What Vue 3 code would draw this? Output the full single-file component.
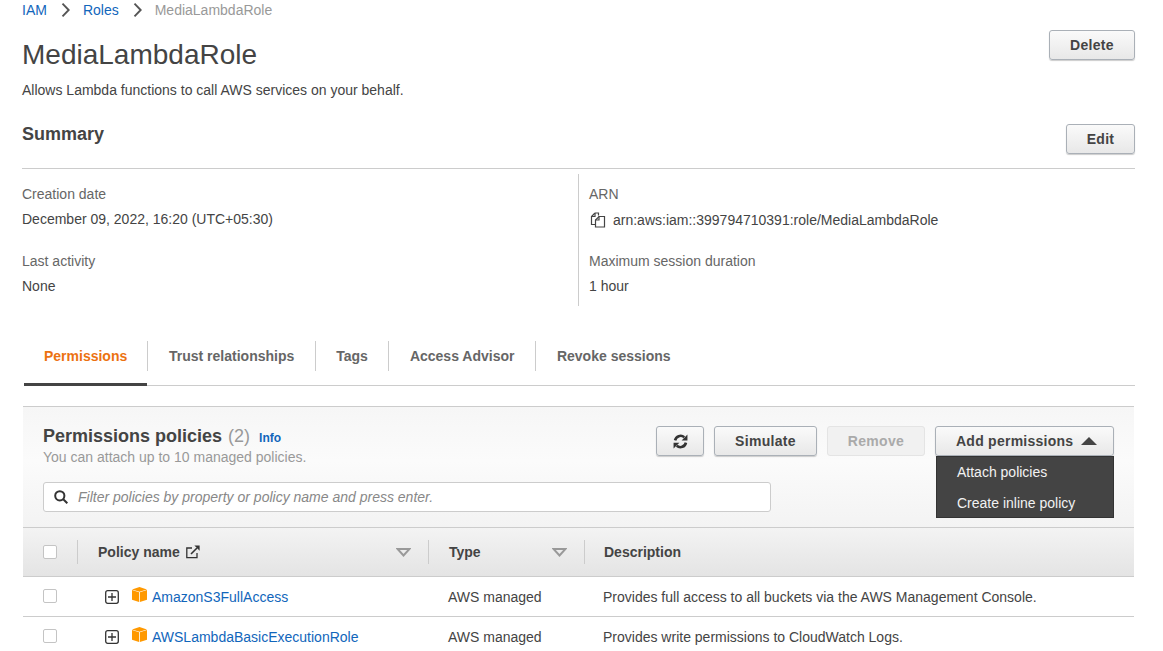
<script setup>
const tabs = ['Permissions', 'Trust relationships', 'Tags', 'Access Advisor', 'Revoke sessions']
const rows = [
  { name: 'AmazonS3FullAccess', type: 'AWS managed', desc: 'Provides full access to all buckets via the AWS Management Console.' },
  { name: 'AWSLambdaBasicExecutionRole', type: 'AWS managed', desc: 'Provides write permissions to CloudWatch Logs.' }
]
</script>

<template>
  <div class="page">
    <nav class="crumbs">
      <a class="link">IAM</a>
      <svg class="chev" width="9" height="14" viewBox="0 0 9 14"><path d="M1.5 .7 L7.7 7 L1.5 13.3" /></svg>
      <a class="link">Roles</a>
      <svg class="chev" width="9" height="14" viewBox="0 0 9 14"><path d="M1.5 .7 L7.7 7 L1.5 13.3" /></svg>
      <span class="crumb-current">MediaLambdaRole</span>
    </nav>

    <header class="head">
      <div>
        <h1>MediaLambdaRole</h1>
        <p class="lead">Allows Lambda functions to call AWS services on your behalf.</p>
      </div>
      <button class="btn delete">Delete</button>
    </header>

    <section class="summary-head">
      <h2>Summary</h2>
      <button class="btn edit">Edit</button>
    </section>

    <section class="details">
      <div class="col">
        <div class="field">
          <div class="label">Creation date</div>
          <div class="value">December 09, 2022, 16:20 (UTC+05:30)</div>
        </div>
        <div class="field">
          <div class="label">Last activity</div>
          <div class="value">None</div>
        </div>
      </div>
      <div class="col right">
        <div class="field">
          <div class="label">ARN</div>
          <div class="value arn">
            <svg width="16" height="16" viewBox="0 0 16 16" fill="none" stroke="#444" stroke-width="1.2">
              <path d="M5 1h3.5v2.5M5 1 1.5 4.5v8h4" />
              <path d="M5 1v3.5H1.5" />
              <path d="M9 4.5h5.5v10.5h-9V8z" />
              <path d="M9 4.5V8H5.5" />
            </svg>
            <span>arn:aws:iam::399794710391:role/MediaLambdaRole</span>
          </div>
        </div>
        <div class="field">
          <div class="label">Maximum session duration</div>
          <div class="value">1 hour</div>
        </div>
      </div>
    </section>

    <div class="tabs">
      <div v-for="(t, i) in tabs" :key="t" class="tab" :class="{ active: i === 0 }">{{ t }}</div>
    </div>

    <section class="panel">
      <div class="panel-top">
        <div class="panel-row">
          <div>
            <div class="panel-title">
              <span class="pt-main">Permissions policies</span>
              <span class="pt-count">(2)</span>
              <a class="info">Info</a>
            </div>
            <div class="panel-sub">You can attach up to 10 managed policies.</div>
          </div>
          <div class="actions">
            <button class="btn refresh">
              <svg width="15" height="15" viewBox="0 0 16 16" fill="none" stroke="#333" stroke-width="2.8">
                <path d="M2.2 6.8A6 6 0 0 1 12 3.4" />
                <path d="M13.8 9.2A6 6 0 0 1 4 12.6" />
                <path d="M15.4 .6v6.2H9.2z" fill="#333" stroke="none" />
                <path d="M.6 15.4V9.2h6.2z" fill="#333" stroke="none" />
              </svg>
            </button>
            <button class="btn simulate">Simulate</button>
            <button class="btn remove" disabled>Remove</button>
            <div class="add-wrap">
              <button class="btn add">
                Add permissions
                <svg width="16" height="8" viewBox="0 0 16 8"><path d="M8 0 L16 8 H0z" fill="#444" /></svg>
              </button>
              <ul class="menu">
                <li>Attach policies</li>
                <li>Create inline policy</li>
              </ul>
            </div>
          </div>
        </div>
        <div class="search">
          <svg width="14" height="14" viewBox="0 0 14 14" fill="none" stroke="#333" stroke-width="2">
            <circle cx="5.8" cy="5.8" r="4.6" />
            <path d="M9 9 L13.3 13.3" />
          </svg>
          <span>Filter policies by property or policy name and press enter.</span>
        </div>
      </div>

      <div class="thead">
        <div class="c-check"><span class="box"></span></div>
        <div class="th c-name">
          <span class="th-label">Policy name
            <svg width="14" height="14" viewBox="0 0 14 14" fill="none" stroke="#333" stroke-width="1.3">
              <path d="M11 8v4.6H.8V3H6" />
              <path d="M5 9 11 3" stroke-width="1.6" />
              <path d="M8.4 .6H13.6V5.8z" fill="#333" stroke="none" />
            </svg>
          </span>
          <svg class="sort" width="15" height="9" viewBox="0 0 15 9"><path d="M1.5 1h12L7.5 7.5z" fill="none" stroke="#999" stroke-width="2" /></svg>
        </div>
        <div class="th c-type">
          <span class="th-label">Type</span>
          <svg class="sort" width="15" height="9" viewBox="0 0 15 9"><path d="M1.5 1h12L7.5 7.5z" fill="none" stroke="#999" stroke-width="2" /></svg>
        </div>
        <div class="th c-desc"><span class="th-label">Description</span></div>
      </div>

      <div v-for="r in rows" :key="r.name" class="row">
        <div class="c-check"><span class="box"></span></div>
        <div class="td c-name">
          <svg class="plus" width="14" height="14" viewBox="0 0 14 14" fill="none" stroke="#333" stroke-width="1.3">
            <rect x=".7" y=".7" width="12.6" height="12.6" rx="2" />
            <path d="M7 3v8M3 7h8" />
          </svg>
          <svg class="cube" width="15" height="15" viewBox="0 0 15 15">
            <path d="M7.5 0 L15 2.4 L7.5 4.8 L0 2.4z" fill="#f90" />
            <path d="M0 3 L7.1 5.3 V15 L0 12.8z" fill="#f90" />
            <path d="M15 3 L7.9 5.3 V15 L15 12.8z" fill="#f90" />
          </svg>
          <a class="link">{{ r.name }}</a>
        </div>
        <div class="td c-type">{{ r.type }}</div>
        <div class="td c-desc">{{ r.desc }}</div>
      </div>
    </section>
  </div>
</template>

<style>
html, body { margin: 0; background: #fff; overflow: hidden; }
</style>

<style scoped>
.page {
  box-sizing: border-box;
  width: 1163px;
  height: 651px;
  overflow: hidden;
  padding: 0 28px 0 22px;
  font-family: "Liberation Sans", Arial, sans-serif;
  font-size: 14px;
  color: #444;
}
.link { color: #1166bb; }
.crumbs { display: flex; align-items: center; height: 20px; }
.chev { fill: none; stroke: #555; stroke-width: 1.9; margin: 0 13px 0 14px; }
.head { display: flex; justify-content: space-between; align-items: flex-start; padding-top: 10px; height: 100px; box-sizing: border-box; }
h1 { margin: 0; font-size: 28px; font-weight: 400; line-height: 50px; color: #444; }
.lead { margin: 0; line-height: 20px; }
.crumb-current { color: #999; }
.btn {
  box-sizing: border-box;
  height: 30px;
  border: 1px solid #aab0b7;
  border-radius: 3px;
  background: linear-gradient(#fafafa, #e8e8e8);
  box-shadow: 0 1px 1px #ccc;
  color: #444;
  font: bold 14px "Liberation Sans", Arial, sans-serif;
  letter-spacing: .3px;
  padding: 0;
}
.delete { width: 86px; }
.summary-head {
  display: flex;
  justify-content: space-between;
  align-items: flex-start;
  margin-top: 4px;
  height: 44px;
  border-bottom: 1px solid #ccc;
}
.edit { width: 69px; }
h2 { margin: 0; font-size: 18px; font-weight: 700; line-height: 20px; color: #444; }
.details { display: flex; margin-top: 5px; height: 132px; }
.col { width: 556px; padding-top: 10px; box-sizing: border-box; }
.col.right { border-left: 1px solid #ccc; padding-left: 10px; }
.field { height: 67px; }
.label { line-height: 20px; color: #666; }
.value { line-height: 20px; margin-top: 5px; color: #444; }
.arn { display: flex; align-items: center; gap: 7px; padding: 1px 0 0 1px; margin-bottom: -1px; }
.tabs {
  display: flex;
  margin: 35px 0 0 2px;
  height: 44px;
  border-bottom: 1px solid #ccc;
}
.tab {
  position: relative;
  padding: 0 21px;
  height: 45px;
  line-height: 31px;
  font-weight: 700;
  color: #666;
  box-sizing: border-box;
}
.tab:nth-child(2) { padding-right: 22px; }
.tab:nth-child(3) { padding: 0 21px 0 20px; }
.tab:nth-child(4) { padding: 0 22px 0 21px; }
.tab:nth-child(5) { padding-left: 20.5px; }
.tab:not(:last-child)::after {
  content: "";
  position: absolute;
  right: 0;
  top: 0;
  height: 30px;
  width: 1px;
  background: #ccc;
}
.tab.active { color: #ec7211; padding: 0 20px; width: 124px; }
.tab.active::before {
  content: "";
  position: absolute;
  left: 0;
  bottom: 0;
  width: 123px;
  height: 3px;
  background: #444;
}
.panel { margin: 20px 1px 0 1px; border-top: 1px solid #ccc; }
.panel-top {
  height: 121px;
  box-sizing: border-box;
  padding: 19px 20px 0;
  background: linear-gradient(#f6f6f6, #fbfbfb 45%, #f3f3f3);
  border-bottom: 1px solid #ccc;
}
.panel-row { display: flex; justify-content: space-between; height: 56px; }
.panel-title { line-height: 20px; white-space: nowrap; }
.pt-main { font-size: 18px; font-weight: 700; color: #444; }
.pt-count { font-size: 18px; color: #999; margin-left: 6px; }
.info { font-size: 12px; font-weight: 700; color: #1166bb; margin-left: 9px; }
.panel-sub { color: #999; line-height: 20px; margin-top: -1px; }
.search {
  display: flex;
  align-items: center;
  gap: 10px;
  box-sizing: border-box;
  width: 728px;
  height: 30px;
  padding-left: 10px;
  background: #fff;
  border: 1px solid #ccc;
  border-radius: 3px;
  color: #888;
  font-style: italic;
}
.actions { display: flex; gap: 10px; align-items: flex-start; }
.refresh { width: 48px; display: flex; align-items: center; justify-content: center; }
.simulate { width: 103px; }
.remove { width: 98px; color: #aaa; border-color: #e4e4e4; box-shadow: none; background: #f1f1f1; }
.add-wrap { position: relative; width: 179px; }
.add { width: 179px; display: flex; align-items: center; padding-left: 20px; gap: 8px; letter-spacing: .25px; }
.menu {
  position: absolute;
  top: 30px;
  left: 1px;
  right: 0;
  margin: 0;
  padding: 0;
  list-style: none;
  background: #444;
  border: 1px solid #333;
  color: #f2f2f2;
  height: 62px;
  box-sizing: border-box;
  z-index: 2;
}
.menu li { height: 31px; line-height: 30px; padding-left: 20px; }
.thead {
  display: flex;
  height: 48px;
  align-items: center;
  background: linear-gradient(#f3f3f3, #e4e4e4);
  border-bottom: 1px solid #ccc;
}
.row { display: flex; align-items: center; height: 39px; border-bottom: 1px solid #ccc; }
.c-check { width: 54px; padding-left: 20px; box-sizing: border-box; margin-top: -1px; }
.box {
  display: block;
  width: 14px;
  height: 14px;
  box-sizing: border-box;
  border: 1px solid #c4c4c4;
  border-radius: 2px;
  background: #fff;
}
.th { position: relative; display: flex; align-items: center; height: 24px; box-sizing: border-box; font-weight: 700; }
.th::before { content: ""; position: absolute; left: 0; top: 0; width: 1px; height: 24px; background: #ccc; }
.th-label { display: inline-flex; align-items: center; gap: 6px; }
.thead .c-name { width: 351px; padding: 0 17px 0 21px; justify-content: space-between; }
.thead .c-type { width: 156px; padding: 0 17px 0 21px; justify-content: space-between; }
.thead .c-desc { padding-left: 20px; }
.row .c-name { width: 351px; padding-left: 28px; display: flex; align-items: center; box-sizing: border-box; }
.row .c-type { width: 156px; padding-left: 20px; box-sizing: border-box; }
.row .c-desc { padding-left: 19px; }
.plus { margin: 1px 13px 0 0; }
.cube { margin-right: 5px; margin-top: -5px; }
</style>
